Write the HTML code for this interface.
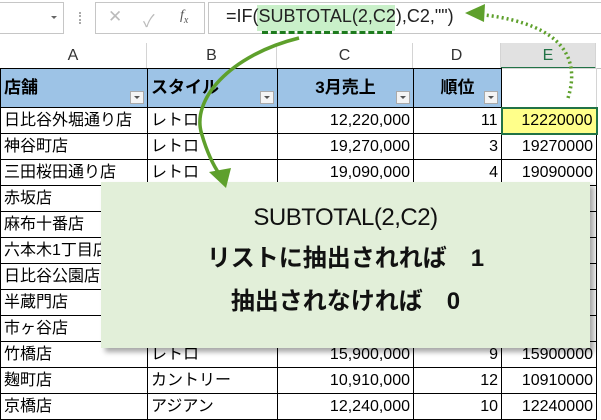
<!DOCTYPE html>
<html><head><meta charset="utf-8"><style>
*{margin:0;padding:0;box-sizing:border-box}
body{width:601px;height:415px;overflow:hidden;background:#fff;position:relative;font-family:"Liberation Sans","Noto Sans CJK JP",sans-serif}
.abs{position:absolute}
.box{position:absolute;border:1px solid #c6c6c6;background:#fff}
.ch{position:absolute;top:43px;height:26px;font-size:16px;color:#333;text-align:center;line-height:26px;border-right:1px solid #d4d4d4}
table{position:absolute;left:0;top:68px;border-collapse:collapse;table-layout:fixed;font-family:"Liberation Sans","Noto Sans CJK JP",sans-serif;font-size:16px}
td{border:1px solid #000;height:26px;padding:0 3px;white-space:nowrap;overflow:hidden;line-height:24px}
tr.h td{height:39px;background:#9dc3e6;font-weight:bold;font-size:17px;position:relative;vertical-align:middle}
.r{text-align:right}
.dd{position:absolute;right:3px;bottom:3px;width:14px;height:13px;background:#f4f4f4;border:1px solid #aaa}
.dd:after{content:"";position:absolute;left:3px;top:4px;border-left:3px solid transparent;border-right:3px solid transparent;border-top:3px solid #555}
</style></head><body>
<div class="box" style="left:-2px;top:2px;width:66px;height:32px"></div>
<div class="abs" style="left:51px;top:16px;border-left:3px solid transparent;border-right:3px solid transparent;border-top:3px solid #666"></div>
<div class="abs" style="left:79px;top:12px;width:2px;height:12px;border-left:2px dotted #aaa"></div>
<div class="box" style="left:95px;top:2px;width:110px;height:32px"></div>
<div class="abs" style="left:108px;top:7px;font-size:17px;color:#bbb">✕</div>
<div class="abs" style="left:143px;top:7px;font-size:17px;color:#bbb">✓</div>
<div class="abs" style="left:180px;top:8px;font-size:14px;color:#555;font-style:italic;font-family:'Liberation Serif',serif">f<sub style="font-size:10px">x</sub></div>
<div class="box" style="left:208px;top:2px;width:400px;height:32px"></div>
<div class="abs" style="left:257px;top:5px;width:138px;height:26px;background:#c9f0c9"></div>
<div class="abs" style="left:226px;top:6px;font-size:18px;color:#222">=IF(SUBTOTAL(2,C2),C2,"")</div>
<div class="abs" style="left:262px;top:31px;width:130px;border-top:3px dashed #1e7b1e"></div>
<div class="ch" style="left:0;width:147px">A</div>
<div class="ch" style="left:147px;width:130px">B</div>
<div class="ch" style="left:277px;width:136px">C</div>
<div class="ch" style="left:413px;width:88px">D</div>
<div class="ch" style="left:501px;width:95px;background:#e1e1e1;color:#217346;border-bottom:2px solid #217346">E</div>
<div class="abs" style="left:0;top:68px;width:601px;border-top:1px solid #c0c0c0"></div>
<table>
<colgroup><col style="width:147px"><col style="width:130px"><col style="width:136px"><col style="width:88px"><col style="width:95px"></colgroup>
<tr class="h"><td>店舗<span class="dd"></span></td><td>スタイル<span class="dd"></span></td><td class="r" style="text-align:center">3月売上<span class="dd"></span></td><td style="text-align:center">順位<span class="dd"></span></td><td style="background:#fff;border-color:#d4d4d4"></td></tr>
<tr><td>日比谷外堀通り店</td><td style="border-left:1px dotted #000">レトロ</td><td class="r">12,220,000</td><td class="r">11</td><td class="r" style="background:#ffff8a;border:2px solid #217346">12220000</td></tr>
<tr><td>神谷町店</td><td style="border-left:1px dotted #000">レトロ</td><td class="r">19,270,000</td><td class="r">3</td><td class="r">19270000</td></tr>
<tr><td>三田桜田通り店</td><td style="border-left:1px dotted #000">レトロ</td><td class="r">19,090,000</td><td class="r">4</td><td class="r">19090000</td></tr>
<tr><td>赤坂店</td><td></td><td></td><td></td><td></td></tr>
<tr><td>麻布十番店</td><td></td><td></td><td></td><td></td></tr>
<tr><td>六本木1丁目店</td><td></td><td></td><td></td><td></td></tr>
<tr><td>日比谷公園店</td><td></td><td></td><td></td><td></td></tr>
<tr><td>半蔵門店</td><td></td><td></td><td></td><td></td></tr>
<tr><td>市ヶ谷店</td><td></td><td></td><td></td><td></td></tr>
<tr><td>竹橋店</td><td>レトロ</td><td class="r">15,900,000</td><td class="r">9</td><td class="r">15900000</td></tr>
<tr><td>麹町店</td><td>カントリー</td><td class="r">10,910,000</td><td class="r">12</td><td class="r">10910000</td></tr>
<tr><td>京橋店</td><td>アジアン</td><td class="r">12,240,000</td><td class="r">10</td><td class="r">12240000</td></tr>
</table>
<div class="abs" style="left:101px;top:182px;width:489px;height:166px;background:#e2efd9;box-shadow:4px 4px 5px rgba(0,0,0,0.35);text-align:center;color:#111">
<div style="position:absolute;left:0;right:0;top:22px;font-size:24px;letter-spacing:-0.5px">SUBTOTAL(2,C2)</div>
<div style="position:absolute;left:0;right:0;top:56px;font-size:24px;font-weight:bold">リストに抽出されれば　1</div>
<div style="position:absolute;left:0;right:0;top:99px;font-size:24px;font-weight:bold">抽出されなければ　0</div>
</div>
<svg class="abs" style="left:0;top:0" width="601" height="415">
<path d="M299,38 C230,55 190,100 202,135 C207,152 213,165 220,175" fill="none" stroke="#5ea02c" stroke-width="3.5"/>
<polygon points="209,172 231,168 226,188" fill="#5ea02c"/>
<path d="M568,98 C580,60 565,25 485,15" fill="none" stroke="#5ea02c" stroke-width="3.5" stroke-dasharray="2,3"/>
<polygon points="465,13 485,4 484,22" fill="#5ea02c"/>
</svg>
</body></html>
